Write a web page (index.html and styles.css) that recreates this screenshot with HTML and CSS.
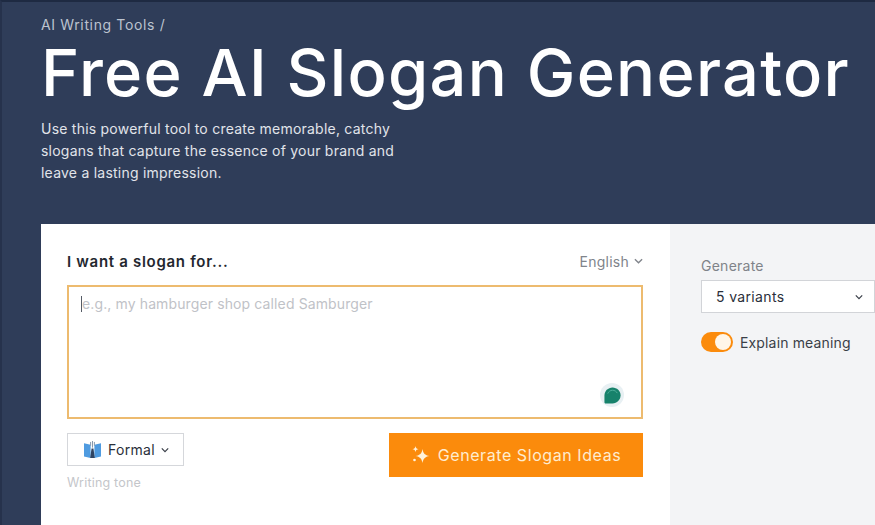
FILE: index.html
```html
<!DOCTYPE html>
<html lang="en">
<head>
  <meta charset="UTF-8">
  <meta name="viewport" content="width=device-width, initial-scale=1.0">
  <title>Free AI Slogan Generator</title>
  <link rel="stylesheet" href="styles.css">
</head>
<body>
  <div class="page">
    <header class="hero">
      <div class="crumb">AI Writing Tools /</div>
      <h1>Free AI Slogan Generator</h1>
      <p class="lead">Use this powerful tool to create memorable, catchy slogans that capture the essence of your brand and leave a lasting impression.</p>
    </header>

    <div class="tool">
      <section class="main">
        <div class="main-head">
          <span class="prompt">I want a slogan for...</span>
          <span class="lang">English
            <svg class="chev" viewBox="0 0 10 6" width="9" height="6"><path d="M1 1l4 4 4-4" /></svg>
          </span>
        </div>
        <div class="inputbox">
          <span class="caret"></span>
          <span class="placeholder">e.g., my hamburger shop called Samburger</span>
          <span class="bubble">
            <svg viewBox="0 0 20 20" width="19" height="19"><path d="M10 1.500c4.700 0 8.500 3.800 8.500 8.300 0 4.700-3.800 8.700-8.500 8.700H2.800c-.8 0-1.300-.6-1.300-1.300V10c0-4.700 3.800-8.500 8.500-8.500z" fill="#17826b" /><path d="M5 8c.8-2.200 2.800-3.500 5-3.500s4 1 5 3" fill="none" stroke="#4fb09b" stroke-width="1" /></svg>
          </span>
        </div>
        <div class="actions">
          <div class="tone-col">
            <button class="tone" type="button">
              <svg class="tone-icon" viewBox="0 0 18 18" width="17" height="17">
                <path d="M0 2.500l7 1.500v14l-7-1.500zM18 2.500l-7 1.500v14l7-1.500z" fill="#4f9be0" />
                <path d="M6.500 18l1.500-10h2l1.500 10z" fill="#2f4463" />
                <path d="M7 5V1M9 7V0M11 5V1" stroke="#7f93a8" stroke-width="1" />
              </svg>
              <span>Formal</span>
              <svg class="chev dark" viewBox="0 0 10 6" width="8" height="6"><path d="M1 1l4 4 4-4" /></svg>
            </button>
            <div class="tone-label">Writing tone</div>
          </div>
          <button class="generate" type="button">
            <svg viewBox="0 0 20 20" width="20" height="20" fill="#fff3dc"><path d="M11.500 4c.8 4.500 2.400 6.200 7 7-4.600.9-6.200 2.500-7 7-.8-4.500-2.400-6.100-7-7 4.600-.8 6.200-2.500 7-7z" /><path d="M4.500 1c.3 2 1 2.800 3 3.200-2 .3-2.700 1-3 3-.3-2-1-2.700-3-3 2-.4 2.700-1.200 3-3.200z" /><circle cx="3.500" cy="15" r="1.300" /></svg>
            <span>Generate Slogan Ideas</span>
          </button>
        </div>
      </section>

      <aside class="side">
        <div class="side-label">Generate</div>
        <div class="select">
          <span>5 variants</span>
          <svg class="chev dark" viewBox="0 0 10 6" width="8" height="6"><path d="M1 1l4 4 4-4" /></svg>
        </div>
        <div class="option">
          <span class="toggle"><span class="knob"></span></span>
          <span>Explain meaning</span>
        </div>
      </aside>
    </div>
  </div>
</body>
</html>
```

FILE: styles.css
```css
html, body {
    margin: 0;
    padding: 0;
}
body {
    font-family: Inter, 'Liberation Sans', sans-serif;
    background: #2f3d59;
    color: #2a2f3a;
    overflow: hidden;
}
.page {
    width: 875px;
    height: 525px;
    overflow: hidden;
    box-sizing: border-box;
    border-top: 2px solid #1e2a42;
    border-left: 2px solid #26324c;
}
.hero {
    padding: 14px 0 0 39px;
    height: 208px;
    box-sizing: border-box;
}
.crumb {
    font-size: 14px;
    line-height: 18px;
    letter-spacing: 0.64px;
    color: #bcc3cf;
}
h1 {
    margin: 1px 0 0;
    font-size: 65px;
    line-height: 76px;
    font-weight: 500;
    letter-spacing: 1.28px;
    color: #ffffff;
    white-space: nowrap;
}
.lead {
    margin: 7px 0 0;
    width: 375px;
    font-size: 14px;
    line-height: 22px;
    letter-spacing: 0.23px;
    color: #e1e4ea;
}
.tool {
    display: flex;
    margin: 14px 0 0 39px;
    height: 301px;
}
.main {
    width: 629px;
    box-sizing: border-box;
    padding: 26px 27px 0 26px;
    background: #ffffff;
}
.main-head {
    display: flex;
    justify-content: space-between;
    align-items: center;
    height: 22px;
}
.prompt {
    font-size: 15px;
    font-weight: 600;
    letter-spacing: 0.7px;
    color: #23272f;
}
.lang {
    display: flex;
    align-items: center;
    gap: 5px;
    font-size: 14px;
    letter-spacing: 0.25px;
    color: #80848b;
}
.chev {
    fill: none;
    stroke: #80848b;
    stroke-width: 1.500;
}
.chev.dark {
    stroke: #3a3f48;
}
.inputbox {
    position: relative;
    display: flex;
    align-items: flex-start;
    height: 134px;
    box-sizing: border-box;
    margin-top: 13px;
    padding: 9px 12px;
    border: 2px solid #edbb6f;
}
.caret {
    width: 1px;
    height: 16px;
    background: #555b66;
}
.placeholder {
    font-size: 14px;
    line-height: 16px;
    letter-spacing: 0.12px;
    color: #bfc2c7;
}
.bubble {
    position: absolute;
    right: 17px;
    bottom: 10px;
    width: 24px;
    height: 24px;
    display: flex;
    align-items: center;
    justify-content: center;
    border-radius: 50%;
    background: #e8f0f3;
}
.actions {
    display: flex;
    justify-content: space-between;
    align-items: flex-start;
    margin-top: 14px;
}
.tone {
    display: flex;
    align-items: center;
    width: 117px;
    height: 33px;
    box-sizing: border-box;
    padding: 0 0 0 16px;
    border: 1px solid #d5d7db;
    background: #ffffff;
    font-family: inherit;
    font-size: 14px;
    letter-spacing: 0.3px;
    color: #2a2f3a;
}
.tone-icon {
    margin-right: 7px;
}
.tone .chev {
    margin-left: 6px;
}
.tone-label {
    margin-top: 9px;
    font-size: 12.500px;
    line-height: 16px;
    letter-spacing: 0.2px;
    color: #c4c6ca;
}
.generate {
    display: flex;
    align-items: center;
    justify-content: center;
    gap: 7px;
    width: 254px;
    height: 44px;
    border: none;
    background: #fb8b0c;
    color: #ffeccf;
    font-family: inherit;
    font-size: 16px;
    letter-spacing: 0.57px;
}
.side {
    flex: 1;
    box-sizing: border-box;
    padding: 33px 0 0 31px;
    background: #f3f4f6;
}
.side-label {
    font-size: 14px;
    line-height: 18px;
    letter-spacing: 0.25px;
    color: #7f8389;
}
.select {
    display: flex;
    justify-content: space-between;
    align-items: center;
    height: 33px;
    box-sizing: border-box;
    margin-top: 5px;
    padding: 0 11px 0 14px;
    border: 1px solid #d2d4d8;
    background: #ffffff;
    font-size: 14px;
    letter-spacing: 0.35px;
    color: #2a2f3a;
}
.option {
    display: flex;
    align-items: center;
    gap: 7px;
    margin-top: 19px;
    font-size: 14px;
    letter-spacing: 0.15px;
    color: #3a3f48;
}
.toggle {
    display: flex;
    justify-content: flex-end;
    align-items: center;
    width: 32px;
    height: 20px;
    box-sizing: border-box;
    padding: 2px;
    border-radius: 10px;
    background: #fb8b0c;
}
.knob {
    width: 16px;
    height: 16px;
    border-radius: 50%;
    background: #fff6e8;
}
```
